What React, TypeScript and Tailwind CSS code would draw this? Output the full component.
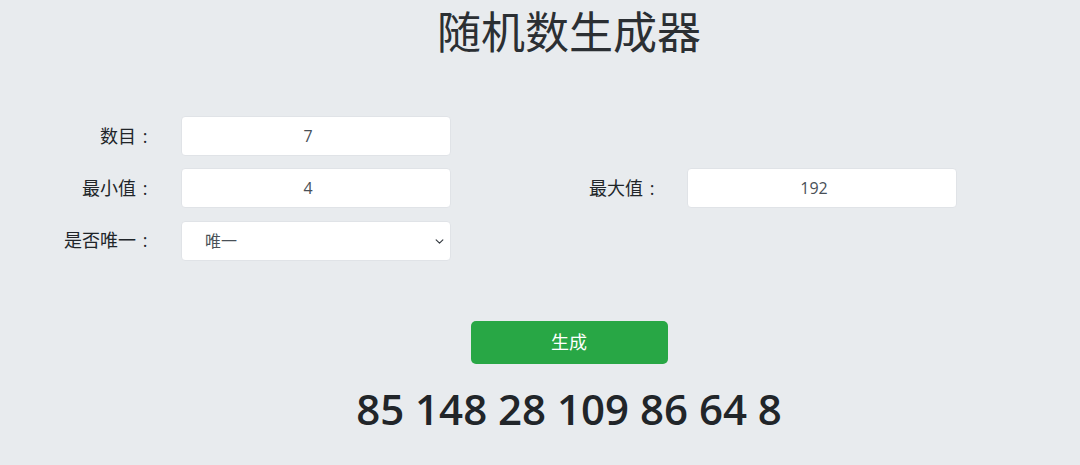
import { useState } from "react";

const font = "font-['Open_Sans','Noto_Sans_CJK_SC',sans-serif]";

function Label({ text, className }: { text: string; className: string }) {
  return (
    <label className={`shrink-0 text-right text-[18px] text-[#212529] ${className}`}>
      {text}
      <span className="inline-block w-[1em] text-center">:</span>
    </label>
  );
}

function NumberInput({ value, className = "" }: { value: string; className?: string }) {
  return (
    <input
      readOnly
      value={value}
      className={`h-[40px] w-[270px] rounded-[4px] border border-[#e0e3e7] bg-white pr-[16px] text-center text-[16px] text-[#495057] outline-none ${className}`}
    />
  );
}

export default function App() {
  const [nums] = useState([85, 148, 28, 109, 86, 64, 8]);

  return (
    <div className={`min-h-screen w-full bg-[#e8ebee] ${font}`}>
      {/* Title */}
      <div className="flex justify-center pl-[58px] pt-[4px]">
        <h1 className="text-[44px] leading-[56px] text-[#2b2f33]">随机数生成器</h1>
      </div>

      {/* Form */}
      <div className="mt-[56px] flex flex-col gap-[12px]">
        <div className="flex items-center">
          <Label text="数目" className="w-[154px]" />
          <NumberInput value="7" className="ml-[27px]" />
        </div>
        <div className="flex items-center">
          <Label text="最小值" className="w-[154px]" />
          <NumberInput value="4" className="ml-[27px]" />
          <Label text="最大值" className="w-[210px]" />
          <NumberInput value="192" className="ml-[26px]" />
        </div>
        <div className="flex items-center">
          <Label text="是否唯一" className="w-[154px]" />
          <div className="relative ml-[27px] mt-[1px] h-[40px] w-[270px]">
            <select
              defaultValue="unique"
              className="h-full w-full appearance-none rounded-[4px] border border-[#e0e3e7] bg-white pl-[23px] text-[16px] text-[#495057] outline-none"
            >
              <option value="unique">唯一</option>
              <option value="repeat">可重复</option>
            </select>
            <svg
              className="pointer-events-none absolute right-[7px] top-[16px] h-[9px] w-[9px] text-[#343a40]"
              viewBox="0 0 16 16"
              fill="none"
              stroke="currentColor"
              strokeWidth={2}
              strokeLinecap="round"
              strokeLinejoin="round"
            >
              <path d="M2 5l6 6 6-6" />
            </svg>
          </div>
        </div>
      </div>

      {/* Action + result */}
      <div className="mt-[60px] flex flex-col items-center pl-[58px]">
        <button className="h-[43px] w-[197px] rounded-[5px] bg-[#28a745] text-[18px] text-white">生成</button>
        <div className="mt-[17px] text-[42px] font-semibold leading-[56px] text-[#212529]">{nums.join(" ")}</div>
      </div>
    </div>
  );
}
